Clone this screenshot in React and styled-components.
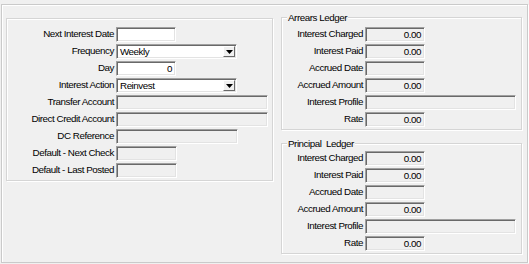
import styled, { createGlobalStyle } from "styled-components";

const Global = createGlobalStyle`
  body {
    margin: 0;
    background: #f0f0f0;
    font-family: "Liberation Sans", Arial, sans-serif;
    font-size: 9.8px;
    letter-spacing: -0.45px;
    color: #000;
  }
`;

const Frame = styled.div`
  margin: 4px 0 0 1px;
  width: 527px;
  height: 259px;
  box-sizing: border-box;
  border: 1px solid #cacaca;
  box-shadow: inset 1px 1px #fff, 1px 1px #fff;
  padding: 12px 0 0 4px;
  display: flex;
  align-items: flex-start;
  gap: 8px;
`;

const Column = styled.div`
  display: flex;
  flex-direction: column;
  gap: 13px;
`;

const Group = styled.div`
  position: relative;
  box-sizing: border-box;
  width: ${(p) => p.$w}px;
  margin-top: ${(p) => p.$mt || 0}px;
  padding: ${(p) => p.$pt}px 0 2px;
  border: 1px solid #d5d5d5;
  box-shadow: inset 1px 1px #fff, 1px 1px #fff;
  display: flex;
  flex-direction: column;
  gap: 2px;
`;

const Title = styled.span`
  position: absolute;
  top: -7px;
  left: 5px;
  padding: 0 1px;
  line-height: 13px;
  white-space: pre;
  background: #f0f0f0;
`;

const Row = styled.div`
  display: flex;
  align-items: center;
  gap: 2px;
  height: 15px;
`;

const Label = styled.span`
  width: ${(p) => p.$lw}px;
  box-sizing: border-box;
  padding-bottom: 2px;
  text-align: right;
  white-space: nowrap;
  line-height: 13px;
`;

const Field = styled.div`
  width: ${(p) => p.$w}px;
  height: 15px;
  box-sizing: border-box;
  border-top: 1px solid #a0a0a0;
  border-left: 1px solid #a0a0a0;
  border-right: 1px solid #fff;
  border-bottom: 1px solid #fff;
  box-shadow: inset 1px 1px #696969, inset -1px -1px #e3e3e3;
  background: ${(p) => (p.$off ? "#f0f0f0" : "#fff")};
  padding: 0 3px;
  line-height: 13px;
  text-align: ${(p) => (p.$right ? "right" : "left")};
  white-space: nowrap;
  overflow: hidden;
`;

const Combo = styled(Field)`
  display: flex;
  align-items: stretch;
  padding: 1px 1px 1px 3px;
  line-height: 11px;
`;

const ComboText = styled.span`
  flex: 1;
`;

const DropButton = styled.span`
  width: 12px;
  box-sizing: border-box;
  background: #f0f0f0;
  border-top: 1px solid #fff;
  border-left: 1px solid #fff;
  border-right: 1px solid #696969;
  border-bottom: 1px solid #696969;
  display: flex;
  align-items: center;
  justify-content: center;
`;

const Arrow = () => (
  <svg width="7" height="4" viewBox="0 0 7 4">
    <path d="M0 0h7L3.5 4z" fill="#000" />
  </svg>
);

const leftRows = [
  { label: "Next Interest Date", w: 60 },
  { label: "Frequency", w: 121, combo: true, value: "Weekly" },
  { label: "Day", w: 60, value: "0", right: true },
  { label: "Interest Action", w: 121, combo: true, value: "Reinvest" },
  { label: "Transfer Account", w: 152, off: true },
  { label: "Direct Credit Account", w: 152, off: true },
  { label: "DC Reference", w: 122, off: true },
  { label: "Default - Next Check", w: 61, off: true },
  { label: "Default - Last Posted", w: 61, off: true },
];

const ledgerRows = [
  { label: "Interest Charged", w: 60, value: "0.00" },
  { label: "Interest Paid", w: 60, value: "0.00" },
  { label: "Accrued Date", w: 60 },
  { label: "Accrued Amount", w: 60, value: "0.00" },
  { label: "Interest Profile", w: 151 },
  { label: "Rate", w: 60, value: "0.00" },
];

function FieldRow({ row, lw }) {
  return (
    <Row>
      <Label $lw={lw}>{row.label}</Label>
      {row.combo ? (
        <Combo $w={row.w}>
          <ComboText>{row.value}</ComboText>
          <DropButton>
            <Arrow />
          </DropButton>
        </Combo>
      ) : (
        <Field $w={row.w} $off={row.off} $right={row.right}>
          {row.value}
        </Field>
      )}
    </Row>
  );
}

function Ledger({ title, pt }) {
  return (
    <Group $w={241} $pt={pt}>
      <Title>{title}</Title>
      {ledgerRows.map((r) => (
        <FieldRow key={r.label} lw={81} row={{ ...r, off: true, right: true }} />
      ))}
    </Group>
  );
}

export default function App() {
  return (
    <>
      <Global />
      <Frame>
        <Group $w={267} $pt={8} $mt={1}>
          {leftRows.map((r) => (
            <FieldRow key={r.label} lw={107} row={r} />
          ))}
        </Group>
        <Column>
          <Ledger title="Arrears Ledger" pt={9} />
          <Ledger title="Principal  Ledger" pt={7} />
        </Column>
      </Frame>
    </>
  );
}
